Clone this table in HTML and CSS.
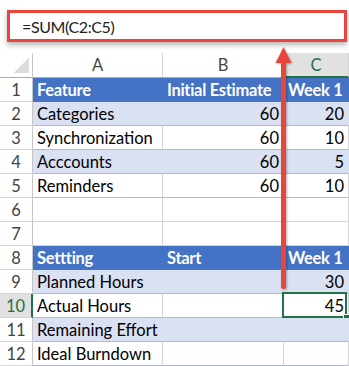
FILE: index.html
```html
<!DOCTYPE html>
<html>
<head>
<meta charset="utf-8">
<link rel="stylesheet" href="styles.css">
</head>
<body>
<div class="formula">=SUM(C2:C5)</div>
<div class="sheet">
  <div class="row">
    <div class="cell corner"></div><div class="cell ch">A</div><div class="cell ch">B</div><div class="cell ch sel">C</div>
  </div>
  <div class="row hrow">
    <div class="cell rh">1</div><div class="cell">Feature</div><div class="cell">Initial Estimate</div><div class="cell">Week 1</div>
  </div>
  <div class="row band">
    <div class="cell rh">2</div><div class="cell">Categories</div><div class="cell num">60</div><div class="cell num">20</div>
  </div>
  <div class="row plain">
    <div class="cell rh">3</div><div class="cell">Synchronization</div><div class="cell num">60</div><div class="cell num">10</div>
  </div>
  <div class="row band">
    <div class="cell rh">4</div><div class="cell">Acccounts</div><div class="cell num">60</div><div class="cell num">5</div>
  </div>
  <div class="row plain last">
    <div class="cell rh">5</div><div class="cell">Reminders</div><div class="cell num">60</div><div class="cell num">10</div>
  </div>
  <div class="row">
    <div class="cell rh">6</div><div class="cell"></div><div class="cell"></div><div class="cell"></div>
  </div>
  <div class="row">
    <div class="cell rh">7</div><div class="cell"></div><div class="cell"></div><div class="cell"></div>
  </div>
  <div class="row hrow">
    <div class="cell rh">8</div><div class="cell">Settting</div><div class="cell">Start</div><div class="cell">Week 1</div>
  </div>
  <div class="row band">
    <div class="cell rh">9</div><div class="cell">Planned Hours</div><div class="cell num"></div><div class="cell num">30</div>
  </div>
  <div class="row plain">
    <div class="cell rh sel">10</div><div class="cell">Actual Hours</div><div class="cell num"></div><div class="cell num active">45</div>
  </div>
  <div class="row band">
    <div class="cell rh">11</div><div class="cell">Remaining Effort</div><div class="cell num"></div><div class="cell num"></div>
  </div>
  <div class="row plain last">
    <div class="cell rh">12</div><div class="cell">Ideal Burndown</div><div class="cell num"></div><div class="cell num"></div>
  </div>
</div>
<svg class="arrow" width="349" height="366" viewBox="0 0 349 366">
  <rect x="281" y="58" width="5" height="231" rx="2.5" fill="#E8453C"/>
  <polygon points="283.5,47 275.5,63 291.5,63" fill="#E8453C"/>
</svg>
</body>
</html>
```
FILE: styles.css
```css
html, body {
  margin: 0;
  padding: 0;
}
body {
  width: 349px;
  height: 366px;
  overflow: hidden;
  position: relative;
  background: #fff;
  font-family: Lato, "Liberation Sans", sans-serif;
  color: #000;
}
.formula {
  margin: 10px 2px 0 7px;
  height: 26px;
  border: 3px solid #E8453C;
  box-shadow: 0 3px 5px rgba(0, 0, 0, 0.28);
  font-size: 16px;
  letter-spacing: -0.4px;
  line-height: 27px;
  padding-left: 12px;
  color: #222;
}
.sheet {
  margin-top: 11px;
  display: grid;
  grid-template-columns: 33px 130px 121px 65px;
  grid-template-rows: 25px;
  grid-auto-rows: 24px;
}
.row {
  display: contents;
}
.cell {
  box-sizing: border-box;
  border-right: 1px solid #D4D4D4;
  border-bottom: 1px solid #D4D4D4;
  font-size: 16.5px;
  line-height: 20px;
  padding: 0 4px 1px 4px;
  display: flex;
  align-items: flex-end;
  white-space: nowrap;
  position: relative;
}
.num {
  justify-content: flex-end;
}
.corner {
  border-right-color: #C6C6C6;
  border-bottom-color: #ABABAB;
  background: linear-gradient(to bottom right, transparent 50%, #DCDCDC 50%) no-repeat;
  background-size: 15px 15px;
  background-position: right 3px bottom 4px;
}
.ch {
  justify-content: center;
  align-items: center;
  padding: 0;
  color: #444;
  border-bottom-color: #ABABAB;
}
.ch.sel {
  background: #E1E1E1;
  color: #217346;
  border-bottom: 2px solid #217346;
}
.rh {
  justify-content: center;
  padding: 0 0 1px 0;
  color: #444;
  border-right-color: #C6C6C6;
  background: #fff;
}
.rh.sel {
  background: #E1E1E1;
  color: #217346;
  border-right: 2px solid #217346;
}
.hrow .cell:not(.rh) {
  background: #4472C4;
  color: #fff;
  font-weight: bold;
  letter-spacing: -0.3px;
  border-right-color: #4472C4;
  border-bottom-color: #4472C4;
}
.band .cell:not(.rh) {
  background: #D9E1F2;
  border-right-color: #D9E1F2;
  border-bottom-color: #A9B9E0;
}
.plain .cell:not(.rh) {
  background: #fff;
  border-bottom-color: #A9B9E0;
}
.active::before {
  content: "";
  position: absolute;
  left: -2px;
  top: -2px;
  right: 1px;
  bottom: -1px;
  border: 2px solid #217346;
}
.active::after {
  content: "";
  position: absolute;
  right: -1px;
  bottom: -3px;
  width: 5px;
  height: 5px;
  background: #217346;
  border-left: 1px solid #fff;
  border-top: 1px solid #fff;
}
.arrow {
  position: absolute;
  left: 0;
  top: 0;
  pointer-events: none;
  filter: drop-shadow(1px 1px 1px rgba(0, 0, 0, 0.3));
}
```
